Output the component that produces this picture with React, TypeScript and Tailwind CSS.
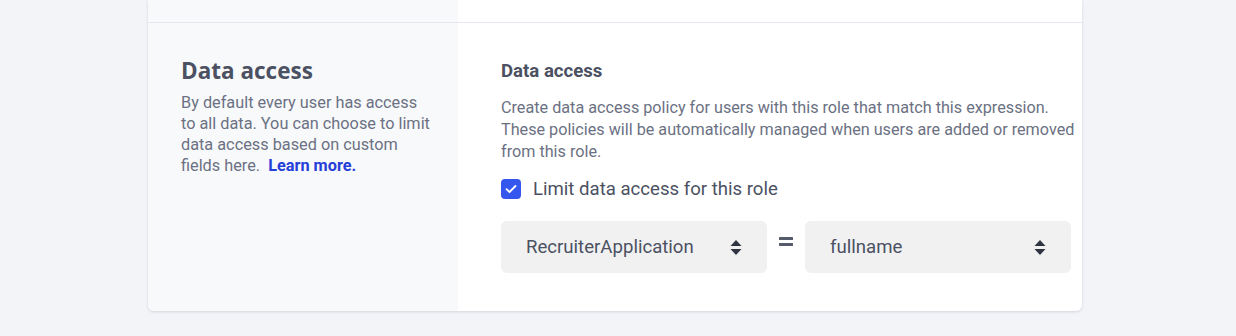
import React from "react";

function SortIcon() {
  return (
    <svg width="12" height="17" viewBox="0 0 12 17" className="shrink-0">
      <path d="M6 1 L11.5 7 H0.5 Z" fill="#2f3441" />
      <path d="M6 16 L11.5 10 H0.5 Z" fill="#2f3441" />
    </svg>
  );
}

function Select({ value }: { value: string }) {
  return (
    <div className="flex h-[52px] flex-1 items-center justify-between rounded-[6px] bg-[#f1f1f2] pl-[25px] pr-[25px]">
      <span className="pt-[1px] text-[18.6px] text-[#4b5162]">{value}</span>
      <SortIcon />
    </div>
  );
}

export default function App() {
  return (
    <div
      className="min-h-[336px] w-full bg-[#f3f4f8]"
      style={{ fontFamily: "Roboto, 'Liberation Sans', sans-serif" }}
    >
      <div className="ml-[148px] w-[934px] overflow-hidden rounded-b-[6px] bg-white shadow-[0_1px_3px_rgba(30,40,70,0.15)]">
        <div className="flex h-[23px] border-b border-[#e6e7ee]">
          <div className="w-[310px] bg-[#f8f9fb]" />
          <div className="flex-1 bg-white" />
        </div>
        <div className="flex">
          <div className="w-[310px] shrink-0 bg-[#f8f9fb] pl-[33px] pr-[24px] pt-[35px]">
            <h2
              className="text-[22.5px] font-bold leading-[26px] text-[#4b5162]"
              style={{ fontFamily: "'Open Sans', Lato, sans-serif" }}
            >
              Data access
            </h2>
            <p className="mt-[8px] w-[252px] text-[16.3px] leading-[21px] text-[#6b7183]">
              By default every user has access to all data. You can choose to limit data access based on custom
              fields here. <a className="ml-[4px] font-bold text-[#2540d9]">Learn more.</a>
            </p>
          </div>
          <div className="flex-1 pl-[43px] pr-[11px] pt-[37px] pb-[38px]">
            <h3 className="text-[18.6px] font-bold leading-[22px] text-[#4b5162]">Data access</h3>
            <p className="mr-[-12px] mt-[15px] text-[16.2px] leading-[22px] text-[#6b7183]">
              Create data access policy for users with this role that match this expression. These policies will be
              automatically managed when users are added or removed from this role.
            </p>
            <label className="mt-[16px] flex items-center gap-[12px]">
              <span className="flex h-[20px] w-[20px] items-center justify-center rounded-[4px] bg-[#3557ee]">
                <svg width="12" height="10" viewBox="0 0 12 10">
                  <path d="M1.5 5.2 L4.5 8 L10.5 2" stroke="white" strokeWidth="1.8" fill="none" strokeLinecap="round" strokeLinejoin="round" />
                </svg>
              </span>
              <span className="text-[18.6px] leading-[20px] text-[#4b5162]">Limit data access for this role</span>
            </label>
            <div className="mt-[22px] flex items-center">
              <Select value="RecruiterApplication" />
              <div className="flex w-[38px] justify-center self-start pt-[15px]">
                <svg width="14" height="10" viewBox="0 0 14 10">
                  <rect x="0" y="1" width="14" height="3" rx="0.5" fill="#555b6b" />
                  <rect x="0" y="7" width="14" height="3" rx="0.5" fill="#555b6b" />
                </svg>
              </div>
              <Select value="fullname" />
            </div>
          </div>
        </div>
      </div>
    </div>
  );
}
